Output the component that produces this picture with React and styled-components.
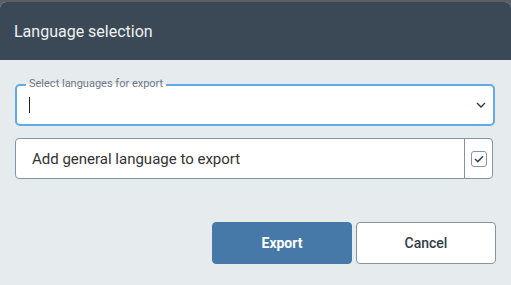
import React from "react";
import styled, { createGlobalStyle } from "styled-components";

const Global = createGlobalStyle`
html, body {
margin: 0;
padding: 0;
background: #5b5f63;
font-family: Roboto, "Noto Sans", sans-serif;
}
`

export default function App() {
    return (
        <Page>
            <Global />
            <Dialog>
                <Header>
                    <h1>Language selection</h1>
                </Header>
                <Body>
                    <SelectField>
                        <Legend>Select languages for export</Legend>
                        <Caret />
                        <svg width="10" height="6" viewBox="0 0 10 6">
                            <path d="M1 1 L5 5 L9 1" fill="none" stroke="#2f3a45" strokeWidth="1.4" />
                        </svg>
                    </SelectField>
                    <CheckRow>
                        <CheckLabel>Add general language to export</CheckLabel>
                        <CheckCell>
                            <CheckBox>
                                <svg width="10" height="8" viewBox="0 0 10 8">
                                    <path d="M1 4 L3.8 6.6 L9 1.2" fill="none" stroke="#3a4653" strokeWidth="1.5" />
                                </svg>
                            </CheckBox>
                        </CheckCell>
                    </CheckRow>
                    <Buttons>
                        <Button primary>Export</Button>
                        <Button>Cancel</Button>
                    </Buttons>
                </Body>
            </Dialog>
        </Page>
    )
}

const Page = styled.div`
width: 511px;
height: 285px;
padding-top: 2px;
box-sizing: border-box;
overflow: hidden;
`
const Dialog = styled.div`
width: 511px;
height: 283px;
background: #e6ebee;
border-radius: 6px 6px 0 0;
overflow: hidden;
`
const Header = styled.div`
height: 58px;
background: #3b4855;
display: flex;
align-items: center;
padding-left: 14px;
h1{
margin: 0;
font-size: 16px;
font-weight: 400;
color: #eef1f4;
}
`
const Body = styled.div`
padding: 24px 16px 0 15px;
display: flex;
flex-direction: column;
`
const SelectField = styled.div`
position: relative;
height: 42px;
box-sizing: border-box;
border: 2px solid #62a9e8;
border-radius: 5px;
background: #fff;
display: flex;
align-items: center;
justify-content: space-between;
padding: 0 7px 0 12px;
`
const Legend = styled.span`
position: absolute;
top: -9px;
left: 9px;
padding: 0 3px;
background: linear-gradient(#e6ebee 50%, #fff 50%);
font-size: 11px;
line-height: 14px;
color: #6c7884;
`
const Caret = styled.span`
width: 1px;
height: 16px;
background: #222;
`
const CheckRow = styled.div`
margin-top: 12px;
height: 41px;
margin-right: 2px;
box-sizing: border-box;
border: 1px solid #8794a2;
border-radius: 4px;
background: #fff;
display: flex;
align-items: center;
`
const CheckLabel = styled.span`
flex: 1;
padding-left: 16px;
font-size: 15px;
color: #333;
`
const CheckCell = styled.div`
width: 27px;
height: 100%;
border-left: 1px solid #8794a2;
display: flex;
align-items: center;
justify-content: center;
`
const CheckBox = styled.div`
width: 14px;
height: 14px;
border: 1px solid #8794a2;
border-radius: 3px;
display: flex;
align-items: center;
justify-content: center;
`
const Buttons = styled.div`
margin-top: 43px;
margin-right: -1px;
display: flex;
justify-content: flex-end;
gap: 4px;
`
const Button = styled.button`
width: 140px;
height: 42px;
box-sizing: border-box;
border-radius: 4px;
font-family: Roboto, sans-serif;
font-size: 14px;
font-weight: ${p => p.primary ? 700 : 500};
background: ${p => p.primary ? "#4679a8" : "#fff"};
color: ${p => p.primary ? "#fff" : "#333c45"};
border: 1px solid ${p => p.primary ? "#4679a8" : "#8794a2"};
`
